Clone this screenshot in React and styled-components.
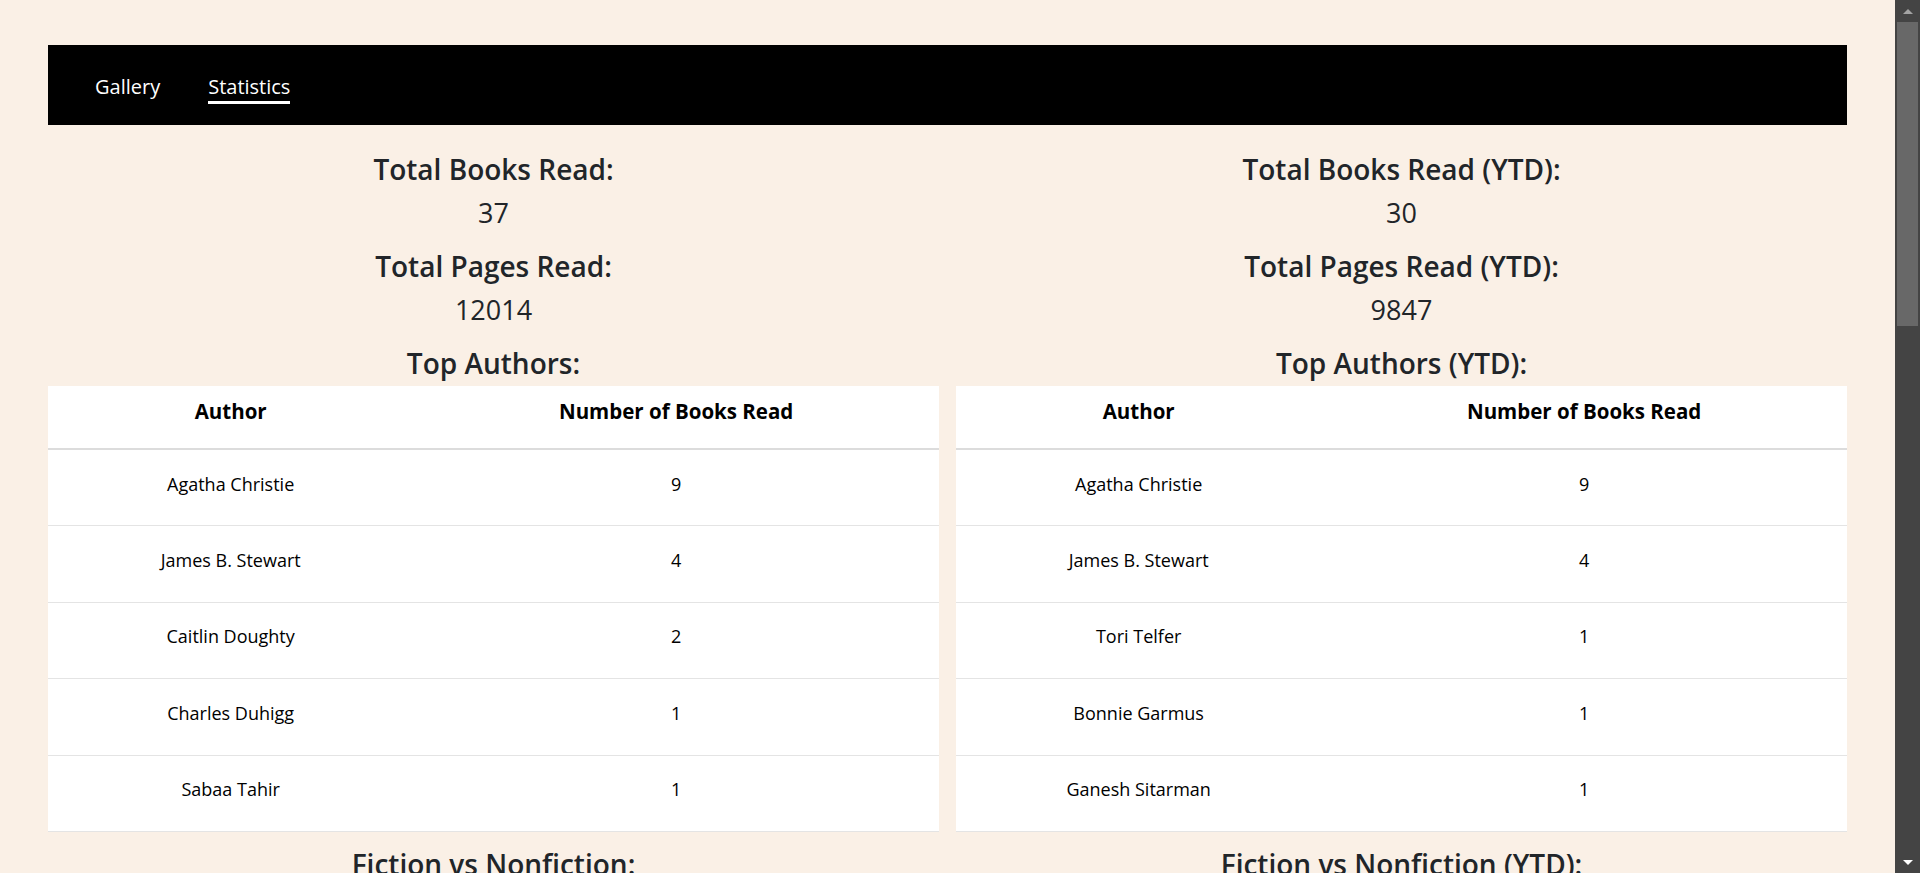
import styled, { createGlobalStyle } from "styled-components";

const GlobalStyle = createGlobalStyle`
  html {
    background: #faf0e6;
    scrollbar-width: none;
  }
  body {
    margin: 0;
    background: #faf0e6;
    font-family: "Open Sans", "Noto Sans", sans-serif;
    color: #212529;
  }
`;

const Page = styled.div`
  padding: 45px 73px 0 48px;
  min-height: 4000px;
  box-sizing: border-box;
`;

/* window scrollbar, as the browser draws it in the capture */
const ScrollTrack = styled.div`
  position: fixed;
  top: 0;
  right: 0;
  bottom: 0;
  width: 25px;
  background: #444444;
  display: flex;
  flex-direction: column;
  align-items: center;
`;

const ScrollArrow = styled.div`
  flex: none;
  height: 22px;
  display: flex;
  align-items: center;
  justify-content: center;
  &::before {
    content: "";
    border-left: 5px solid transparent;
    border-right: 5px solid transparent;
    ${(p) =>
      p.$down
        ? "border-top: 5px solid #ffffff;"
        : "border-bottom: 5px solid #a3a3a3;"}
  }
`;

const ScrollThumb = styled.div`
  width: 21px;
  height: 304px;
  background: #686868;
`;

const ScrollRest = styled.div`
  flex: 1;
`;

const NavBar = styled.nav`
  display: flex;
  align-items: center;
  gap: 48px;
  height: 80px;
  padding-left: 47px;
  background: #000;
`;

const NavLink = styled.a`
  color: #fff;
  font-size: 20px;
  line-height: 28px;
  text-decoration: none;
  cursor: pointer;
  border-bottom: 3px solid ${(p) => (p.$active ? "#fff" : "transparent")};
  padding-top: 6px;
`;

const Columns = styled.div`
  display: grid;
  grid-template-columns: 1fr 1fr;
  column-gap: 17px;
  margin-top: 22px;
`;

const Column = styled.section`
  display: flex;
  flex-direction: column;
  text-align: center;
`;

const Heading = styled.h2`
  margin: ${(p) => p.$gap} 0 0;
  font-size: 28px;
  line-height: 44px;
  font-weight: 600;
`;

const Value = styled.p`
  margin: 0;
  font-size: 27px;
  line-height: 44px;
  font-weight: 400;
`;

const Table = styled.table`
  width: 100%;
  border-collapse: collapse;
  background: #fff;
  margin-top: 1px;
  color: #000;
`;

const HeadCell = styled.th`
  width: ${(p) => p.$w};
  height: 50px;
  padding: 12px 0 0;
  vertical-align: top;
  font-size: 20.5px;
  line-height: 26px;
  font-weight: 700;
  border-bottom: 2px solid #dcdcdc;
`;

const Cell = styled.td`
  height: 67.4px;
  padding: 0 0 8px;
  font-size: 18px;
  text-align: center;
  border-bottom: 1px solid #e4e4e4;
`;

const ChartArea = styled.div`
  height: 420px;
`;

const overall = {
  books: 37,
  pages: 12014,
  authors: [
    ["Agatha Christie", 9],
    ["James B. Stewart", 4],
    ["Caitlin Doughty", 2],
    ["Charles Duhigg", 1],
    ["Sabaa Tahir", 1],
  ],
};

const ytd = {
  books: 30,
  pages: 9847,
  authors: [
    ["Agatha Christie", 9],
    ["James B. Stewart", 4],
    ["Tori Telfer", 1],
    ["Bonnie Garmus", 1],
    ["Ganesh Sitarman", 1],
  ],
};

function StatsColumn({ data, suffix }) {
  return (
    <Column>
      <Heading $gap="0">Total Books Read{suffix}:</Heading>
      <Value>{data.books}</Value>
      <Heading $gap="9px">Total Pages Read{suffix}:</Heading>
      <Value>{data.pages}</Value>
      <Heading $gap="9px">Top Authors{suffix}:</Heading>
      <Table>
        <thead>
          <tr>
            <HeadCell $w="41%">Author</HeadCell>
            <HeadCell $w="59%">Number of Books Read</HeadCell>
          </tr>
        </thead>
        <tbody>
          {data.authors.map(([name, count]) => (
            <tr key={name}>
              <Cell>{name}</Cell>
              <Cell>{count}</Cell>
            </tr>
          ))}
        </tbody>
      </Table>
      <Heading $gap="10px">Fiction vs Nonfiction{suffix}:</Heading>
      <ChartArea />
    </Column>
  );
}

export default function App() {
  return (
    <>
      <GlobalStyle />
      <Page>
        <NavBar>
          <NavLink>Gallery</NavLink>
          <NavLink $active>Statistics</NavLink>
        </NavBar>
        <Columns>
          <StatsColumn data={overall} suffix="" />
          <StatsColumn data={ytd} suffix=" (YTD)" />
        </Columns>
      </Page>
      <ScrollTrack>
        <ScrollArrow />
        <ScrollThumb />
        <ScrollRest />
        <ScrollArrow $down />
      </ScrollTrack>
    </>
  );
}
